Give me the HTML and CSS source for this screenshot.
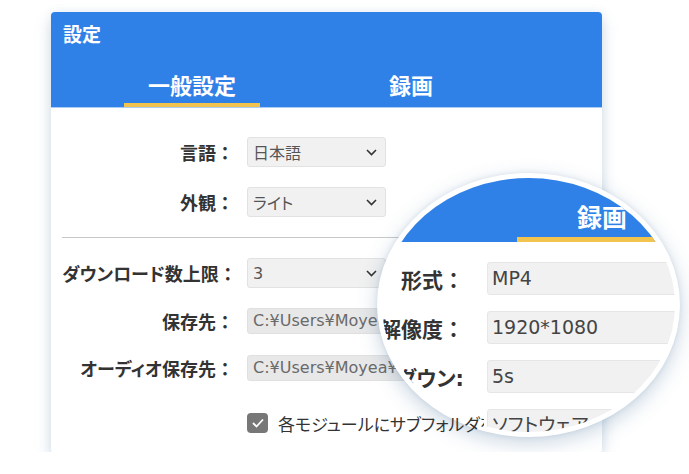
FILE: index.html
```html
<!DOCTYPE html>
<html lang="ja">
<head>
  <meta charset="UTF-8">
  <meta name="viewport" content="width=device-width, initial-scale=1.0">
  <title>設定</title>
  <link rel="stylesheet" href="styles.css">
</head>
<body>
  <div class="settings">
    <header class="settings-head">
      <h1>設定</h1>
      <nav class="tabs">
        <span class="tab active">一般設定</span>
        <span class="tab">録画</span>
      </nav>
    </header>

    <section class="settings-body">
      <div class="row">
        <span class="field-label">言語<span class="colon">：</span></span>
        <div class="select">日本語
          <svg width="11" height="7" viewBox="0 0 11 7"><polyline points="1,1 5.5,5.5 10,1" /></svg>
        </div>
      </div>
      <div class="row">
        <span class="field-label">外観<span class="colon">：</span></span>
        <div class="select">ライト
          <svg width="11" height="7" viewBox="0 0 11 7"><polyline points="1,1 5.5,5.5 10,1" /></svg>
        </div>
      </div>

      <hr class="divider">

      <div class="row">
        <span class="field-label">ダウンロード数上限<span class="colon">：</span></span>
        <div class="select">3
          <svg width="11" height="7" viewBox="0 0 11 7"><polyline points="1,1 5.5,5.5 10,1" /></svg>
        </div>
      </div>
      <div class="row row-input">
        <span class="field-label">保存先<span class="colon">：</span></span>
        <div class="text-input">C:¥Users¥Moyea¥Downloads</div>
      </div>
      <div class="row row-input last">
        <span class="field-label">オーディオ保存先<span class="colon">：</span></span>
        <div class="text-input">C:¥Users¥Moyea¥Downloads</div>
      </div>

      <div class="check-row">
        <span class="checkbox">
          <svg width="14" height="12" viewBox="0 0 14 12"><polyline points="2,6 5.5,9.5 12,2.5" /></svg>
        </span>
        <span class="check-text">各モジュールにサブフォルダを作成する</span>
      </div>
    </section>

    <!-- zoomed view of the recording tab -->
    <div class="lens">
      <div class="lens-head">
        <span class="lens-tab">録画</span>
      </div>
      <div class="lens-body">
        <div class="lens-row">
          <span class="lens-label">形式<span class="colon">：</span></span>
          <div class="lens-input">MP4</div>
        </div>
        <div class="lens-row">
          <span class="lens-label">解像度<span class="colon">：</span></span>
          <div class="lens-input">1920*1080</div>
        </div>
        <div class="lens-row">
          <span class="lens-label">カウントダウン:</span>
          <div class="lens-input">5s</div>
        </div>
        <div class="lens-row">
          <span class="lens-label"></span>
          <div class="lens-input">ソフトウェア</div>
        </div>
      </div>
    </div>
  </div>
</body>
</html>
```

FILE: styles.css
```css
body {
  margin: 0;
  background-color: #fff;
  color: #333;
  font-family: "DejaVu Sans", "Noto Sans CJK JP", sans-serif;
  font-feature-settings: "palt";
}

.colon {
  font-feature-settings: normal;
}

.settings {
  position: relative;
  width: 551px;
  height: 440px;
  margin: 12px 0 0 51px;
  background-color: #fff;
  border-radius: 4px 4px 2px 2px;
  box-shadow: 0 8px 16px rgba(110, 145, 180, 0.28), 0 0 10px rgba(110, 145, 180, 0.12);
}

.settings-head {
  height: 95px;
  box-sizing: border-box;
  padding: 11px 12px 0;
  background-color: #2f81e8;
  border-radius: 4px 4px 0 0;
  box-shadow: 0 1px 0 #a9cdf5;
  color: #fff;
}

.settings-head h1 {
  margin: 0;
  font-size: 19px;
  line-height: 24px;
  font-weight: bold;
}

.tabs {
  display: flex;
  gap: 83px;
  margin-top: 25px;
  padding-left: 61px;
}

.tab {
  width: 136px;
  text-align: center;
  font-size: 22px;
  font-weight: bold;
  line-height: 30px;
  padding-bottom: 1px;
  border-bottom: 4px solid transparent;
}

.tab.active {
  border-bottom-color: #f2c44d;
}

.settings-body {
  padding: 30px 11px 0;
}

.row {
  display: flex;
  align-items: center;
  height: 30px;
  margin-bottom: 20px;
}

.row-input {
  height: 26px;
  margin-bottom: 21px;
}

.row.last {
  margin-bottom: 32px;
}

.field-label {
  flex: none;
  width: 172px;
  margin-right: 13px;
  text-align: right;
  white-space: nowrap;
  font-size: 18px;
  font-weight: bold;
  color: #333;
}

.select {
  display: flex;
  align-items: center;
  justify-content: space-between;
  width: 139px;
  height: 100%;
  box-sizing: border-box;
  padding: 0 8px 0 5px;
  background-color: #f1f1f1;
  border: 1px solid #e2e2e2;
  border-radius: 3px;
  font-size: 16px;
  color: #555;
}

.select svg polyline {
  fill: none;
  stroke: #333;
  stroke-width: 1.6;
}

.text-input {
  width: 160px;
  height: 100%;
  box-sizing: border-box;
  padding: 0 5px;
  line-height: 24px;
  background-color: #e8e8e8;
  border: 1px solid #e0e0e0;
  border-radius: 3px;
  font-size: 16px;
  color: #6a6a6a;
  white-space: nowrap;
  overflow: hidden;
}

.divider {
  border: 0;
  border-top: 1px solid #c8c8c8;
  margin: 0 0 20px;
}

.check-row {
  position: relative;
  z-index: 1;
  display: flex;
  align-items: center;
  height: 20px;
  padding-left: 185px;
  font-size: 17px;
  color: #333;
  white-space: nowrap;
}

.checkbox {
  display: flex;
  align-items: center;
  justify-content: center;
  width: 21px;
  height: 20px;
  margin-right: 10px;
  background-color: #777;
  border-radius: 4px;
}

.checkbox svg polyline {
  fill: none;
  stroke: #fff;
  stroke-width: 1.8;
}

.check-text {
  width: 206px;
  overflow: hidden;
}

.lens {
  position: absolute;
  left: 326px;
  top: 161px;
  width: 303px;
  height: 264px;
  box-sizing: border-box;
  border: 5px solid #fff;
  border-radius: 50%;
  overflow: hidden;
  background-color: #fff;
  box-shadow: 0 6px 20px rgba(80, 120, 160, 0.3), 0 0 5px rgba(80, 120, 160, 0.15);
}

.lens-head {
  height: 64px;
  box-sizing: border-box;
  padding: 26px 0 0 135px;
  background-color: #2f81e8;
  color: #fff;
}

.lens-tab {
  display: block;
  width: 170px;
  text-align: center;
  font-size: 25px;
  font-weight: bold;
  line-height: 30px;
  padding-bottom: 3px;
  border-bottom: 5px solid #f2c44d;
}

.lens-body {
  padding-top: 20px;
}

.lens-row {
  display: flex;
  align-items: center;
  height: 33px;
  margin-bottom: 16px;
}

.lens-label {
  flex: none;
  display: flex;
  justify-content: flex-end;
  width: 82px;
  margin-right: 23px;
  white-space: nowrap;
  font-size: 21px;
  font-weight: bold;
  color: #333;
}

.lens-input {
  flex: none;
  width: 260px;
  height: 100%;
  box-sizing: border-box;
  padding: 0 4px;
  line-height: 31px;
  background-color: #f1f1f1;
  border: 1px solid #e6e6e6;
  border-radius: 3px;
  font-size: 19px;
  color: #444;
  white-space: nowrap;
}
```
